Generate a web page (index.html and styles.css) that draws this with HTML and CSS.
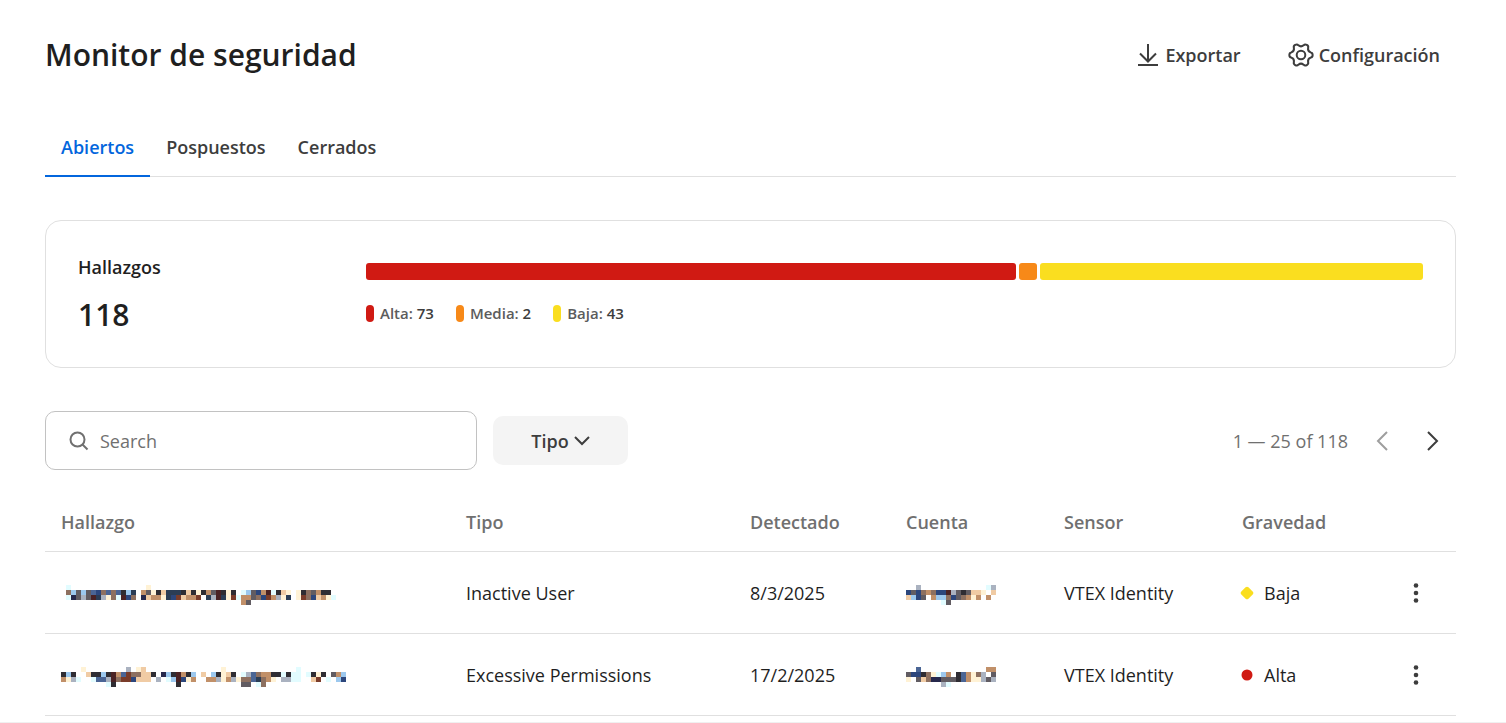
FILE: index.html
```html
<!DOCTYPE html>
<html lang="es">
<head>
<meta charset="utf-8">
<meta name="viewport" content="width=device-width, initial-scale=1">
<title>Monitor de seguridad</title>
<link rel="stylesheet" href="styles.css">
</head>
<body>
<main class="page">
  <header class="page-header">
    <h1 class="title">Monitor de seguridad</h1>
    <div class="actions">
      <button class="action" type="button">
        <svg class="icon-action" viewBox="0 0 24 24" aria-hidden="true"><path d="M13 1v17.500M5 10.500l8 8 8-8M3 22h20"/></svg>
        Exportar
      </button>
      <button class="action" type="button">
        <svg class="icon-action" viewBox="0 0 24 24" aria-hidden="true"><circle cx="12" cy="12" r="4.300"/><path d="M21.700 9.400C24.300 9.800 24.300 14.200 21.700 14.600Q18.500 15.700 19.100 19.100C20 21.500 16.300 23.700 14.600 21.700Q12 19.500 9.400 21.700C7.700 23.700 4 21.500 4.900 19.100Q5.500 15.700 2.300 14.600C-.3 14.200 -.3 9.800 2.300 9.400Q5.500 8.300 4.900 4.900C4 2.500 7.700 .3 9.400 2.300Q12 4.500 14.600 2.300C16.300 .3 20 2.500 19.100 4.900Q18.500 8.300 21.700 9.400Z"/></svg>
        Configuración
      </button>
    </div>
  </header>

  <div class="tabs" role="tablist">
    <button class="tab tab-active" type="button" role="tab" aria-selected="true">Abiertos</button>
    <button class="tab" type="button" role="tab" aria-selected="false">Pospuestos</button>
    <button class="tab" type="button" role="tab" aria-selected="false">Cerrados</button>
  </div>

  <section class="card">
    <div class="total">
      <h2 class="total-label">Hallazgos</h2>
      <p class="total-value">118</p>
    </div>
    <div class="chart">
      <div class="bar">
        <span class="segment high" style="flex-grow: 73"></span>
        <span class="segment medium" style="flex-grow: 2"></span>
        <span class="segment low" style="flex-grow: 43"></span>
      </div>
      <ul class="legend">
        <li class="legend-item"><span class="swatch high"></span><span>Alta: <b>73</b></span></li>
        <li class="legend-item"><span class="swatch medium"></span><span>Media: <b>2</b></span></li>
        <li class="legend-item"><span class="swatch low"></span><span>Baja: <b>43</b></span></li>
      </ul>
    </div>
  </section>

  <div class="toolbar">
    <label class="search">
      <svg class="icon-search" viewBox="0 0 20 20" aria-hidden="true"><circle cx="8.500" cy="8.500" r="7"/><path d="M13.500 13.500l5 5"/></svg>
      <input class="search-input" type="search" placeholder="Search" aria-label="Search">
    </label>
    <button class="filter" type="button">Tipo
      <svg class="icon-down" viewBox="0 0 16 10" aria-hidden="true"><path d="M1 1l7 7 7-7"/></svg>
    </button>
    <nav class="pager" aria-label="Paginación">
      <span class="pager-text">1 — 25 of 118</span>
      <button class="pager-button" type="button" aria-label="Anterior" disabled><svg class="icon-page" viewBox="0 0 12 20" aria-hidden="true"><path d="M10 1L1 10l9 9"/></svg></button>
      <button class="pager-button" type="button" aria-label="Siguiente"><svg class="icon-page" viewBox="0 0 12 20" aria-hidden="true"><path d="M2 1l9 9-9 9"/></svg></button>
    </nav>
  </div>

  <table class="findings">
    <colgroup>
      <col class="col-finding"><col class="col-type"><col class="col-date"><col class="col-account"><col class="col-sensor"><col class="col-severity"><col class="col-menu">
    </colgroup>
    <thead>
      <tr><th>Hallazgo</th><th>Tipo</th><th>Detectado</th><th>Cuenta</th><th>Sensor</th><th>Gravedad</th><td></td></tr>
    </thead>
    <tbody>
      <tr>
        <td><svg class="mosaic" data-name="finding-1"></svg></td>
        <td>Inactive User</td>
        <td>8/3/2025</td>
        <td><svg class="mosaic" data-name="account-1"></svg></td>
        <td>VTEX Identity</td>
        <td><span class="severity"><svg class="icon-severity" viewBox="0 0 14 14" aria-hidden="true"><rect class="fill-low" x="2" y="2" width="10" height="10" rx="2" transform="rotate(45 7 7)"/></svg>Baja</span></td>
        <td class="menu-cell"><button class="menu" type="button" aria-label="Acciones"><svg class="icon-menu" viewBox="0 0 6 20" aria-hidden="true"><circle cx="3" cy="2.500" r="2.300"/><circle cx="3" cy="10" r="2.300"/><circle cx="3" cy="17.500" r="2.300"/></svg></button></td>
      </tr>
      <tr>
        <td><svg class="mosaic" data-name="finding-2"></svg></td>
        <td>Excessive Permissions</td>
        <td>17/2/2025</td>
        <td><svg class="mosaic" data-name="account-2"></svg></td>
        <td>VTEX Identity</td>
        <td><span class="severity"><svg class="icon-severity" viewBox="0 0 14 14" aria-hidden="true"><circle class="fill-high" cx="7" cy="7" r="5.500"/></svg>Alta</span></td>
        <td class="menu-cell"><button class="menu" type="button" aria-label="Acciones"><svg class="icon-menu" viewBox="0 0 6 20" aria-hidden="true"><circle cx="3" cy="2.500" r="2.300"/><circle cx="3" cy="10" r="2.300"/><circle cx="3" cy="17.500" r="2.300"/></svg></button></td>
      </tr>
    </tbody>
  </table>
</main>
<footer class="page-end"></footer>
<script src="mosaic.js"></script>
</body>
</html>
```
FILE: styles.css
```css
* {
  box-sizing: border-box;
}

body {
  margin: 0;
  background: #fff;
  color: #1f1f1f;
  font-family: "Open Sans", "Noto Sans", sans-serif;
  font-size: 18px;
  line-height: 24px;
}

button {
  padding: 0;
  border: 0;
  background: none;
  color: #3d3d3d;
  font: inherit;
  font-weight: 600;
  cursor: pointer;
}

svg {
  display: block;
  flex: none;
  fill: none;
  stroke: currentColor;
  stroke-width: 2;
}

.page {
  padding: 31px 50px 0 45px;
}

.page-header {
  display: flex;
  align-items: center;
  justify-content: space-between;
}

.title {
  margin: 0;
  font-size: 30px;
  line-height: 48px;
  font-weight: 600;
}

.actions {
  display: flex;
  gap: 48px;
  padding-right: 16px;
}

.action {
  display: flex;
  align-items: center;
  gap: 6px;
}

.icon-action {
  width: 24px;
  height: 24px;
  overflow: visible;
}

.tabs {
  display: flex;
  margin-top: 40px;
  border-bottom: 1px solid #e0e0e0;
}

.tab {
  height: 58px;
  margin-bottom: -1px;
  padding: 0 16px;
  border-bottom: 2px solid transparent;
}

.tab-active {
  border-color: #0366dd;
  color: #0366dd;
}

.card {
  display: flex;
  margin-top: 43px;
  padding: 34px 32px 28px;
  border: 1px solid #e0e0e0;
  border-radius: 16px;
}

.total {
  flex: 0 0 288px;
}

.total-label {
  margin: 0;
  font-size: 18px;
  line-height: 24px;
  font-weight: 600;
}

.total-value {
  margin: 12px 0 0;
  font-size: 30px;
  line-height: 48px;
  font-weight: 600;
}

.chart {
  flex: 1;
  padding-top: 8px;
}

.bar {
  display: flex;
  gap: 3px;
  height: 17px;
}

.segment {
  flex-basis: 0;
  border-radius: 3px;
}

.high {
  background: #d01a13;
}

.medium {
  background: #f78918;
}

.low {
  background: #fade1f;
}

.legend {
  display: flex;
  gap: 22px;
  margin: 21px 0 0;
  padding: 0;
  list-style: none;
  color: #5c5c5c;
  font-size: 15px;
  line-height: 24px;
  font-weight: 600;
}

.legend-item {
  display: flex;
  align-items: center;
  gap: 6px;
}

.legend b {
  color: #3d3d3d;
  font-weight: 600;
}

.swatch {
  width: 8px;
  height: 17px;
  border-radius: 4px;
}

.toolbar {
  display: flex;
  align-items: center;
  gap: 16px;
  margin-top: 43px;
}

.search {
  display: flex;
  align-items: center;
  gap: 11px;
  width: 432px;
  height: 59px;
  padding: 0 23px;
  border: 1px solid #c2c2c2;
  border-radius: 10px;
  color: #707070;
}

.icon-search {
  width: 20px;
  height: 20px;
}

.search-input {
  flex: 1;
  min-width: 0;
  padding: 0;
  border: 0;
  outline: 0;
  background: none;
  color: inherit;
  font: inherit;
}

.search-input::placeholder {
  color: #707070;
}

.filter {
  display: flex;
  align-items: center;
  justify-content: center;
  gap: 5px;
  width: 135px;
  height: 49px;
  border-radius: 10px;
  background: #f4f4f4;
}

.icon-down {
  width: 16px;
  height: 10px;
}

.pager {
  display: flex;
  align-items: center;
  margin-left: auto;
}

.pager-text {
  margin-right: 10px;
  color: #707070;
}

.pager-button {
  display: flex;
  align-items: center;
  justify-content: center;
  width: 49px;
  height: 49px;
}

.pager-button:disabled {
  color: #9e9e9e;
}

.icon-page {
  width: 12px;
  height: 20px;
  overflow: visible;
}

.findings {
  width: 100%;
  margin-top: 23px;
  border-collapse: collapse;
  table-layout: fixed;
}

.col-finding { width: 405px; }
.col-type { width: 284px; }
.col-date { width: 156px; }
.col-account { width: 158px; }
.col-sensor { width: 178px; }
.col-severity { width: 149px; }
.col-menu { width: 81px; }

.findings th,
.findings td {
  height: 82px;
  padding: 2px 16px 0;
  border-bottom: 1px solid #e0e0e0;
  text-align: left;
  white-space: nowrap;
}

.findings th,
.findings thead td {
  height: 58px;
  padding-top: 0;
  color: #707070;
  font-weight: 600;
}

.mosaic {
  margin-top: 4px;
  stroke: none;
}

.severity {
  display: flex;
  align-items: center;
  gap: 10px;
}

.icon-severity {
  width: 14px;
  height: 14px;
  margin-left: -2px;
  stroke: none;
}

.fill-low {
  fill: #fade1f;
}

.fill-high {
  fill: #d01a13;
}

.menu {
  display: flex;
  align-items: center;
  justify-content: center;
  width: 49px;
  height: 49px;
}

.icon-menu {
  width: 6px;
  height: 20px;
  fill: currentColor;
  stroke: none;
}

.page-end {
  margin-top: 6px;
  border-top: 1px solid #f0f0f0;
}
```
FILE: mosaic.js
```js
// Redacted values are drawn as grids of 5px cells, one letter per colour.
const colours = {
  K: "#2f2d33", G: "#615c62", B: "#2c467c", b: "#9cc8ee", c: "#e2fcff",
  n: "#26284c", T: "#8d7060", t: "#c19069", p: "#f0cba4", y: "#fff2d5",
  r: "#7a3c2a", m: "#4a2224", s: "#aab2c0", d: "#2b3d55", o: "#4a6595"
};

const grids = {
  "finding-1": [
    ".c...............y.....................................",
    ".TbGbGoBToToKbd.tGyKpdddKpKyKtGmKyK.cbGBtmcKpy.yKTGtKK.",
    ".cnGsGmdsyTcmBT.npttydBrpttr.dsmdyrcttGTBrtsyd.yrTBptyc",
    "....................................tG................."
  ],
  "finding-2": [
    "....y........s.yp...............y..............c.........",
    "KbK..pKKbKmtorTTppK.nbKmtKb.p.bKypK.csoTttKKcKcc.cKyK.Gtb",
    "tysc..coosmTrrBppp.s.cbmByt..ttsytsyTTodTty.sscc..pr.c.bB",
    ".........cK............K............GG.cT................"
  ],
  "account-1": [
    "..s.............cs",
    "BGBTtTBBmsGKGppy.p",
    "pbBG.tbbTBGTtyt.t.",
    ".......cG........."
  ],
  "account-2": [
    "..o.............tt",
    "GBBKTycbt.KotyTs.G",
    "y.GpTnnGGGKotyysGs",
    ".......sc........."
  ]
};

const cell = 5;

document.querySelectorAll(".mosaic").forEach((svg) => {
  const rows = grids[svg.dataset.name];
  svg.setAttribute("width", Math.max(...rows.map((row) => row.length)) * cell);
  svg.setAttribute("height", rows.length * cell);
  rows.forEach((row, y) => {
    [...row].forEach((key, x) => {
      if (key === ".") return;
      const rect = document.createElementNS("http://www.w3.org/2000/svg", "rect");
      rect.setAttribute("x", x * cell);
      rect.setAttribute("y", y * cell);
      rect.setAttribute("width", cell);
      rect.setAttribute("height", cell);
      rect.setAttribute("fill", colours[key]);
      svg.append(rect);
    });
  });
});
```
